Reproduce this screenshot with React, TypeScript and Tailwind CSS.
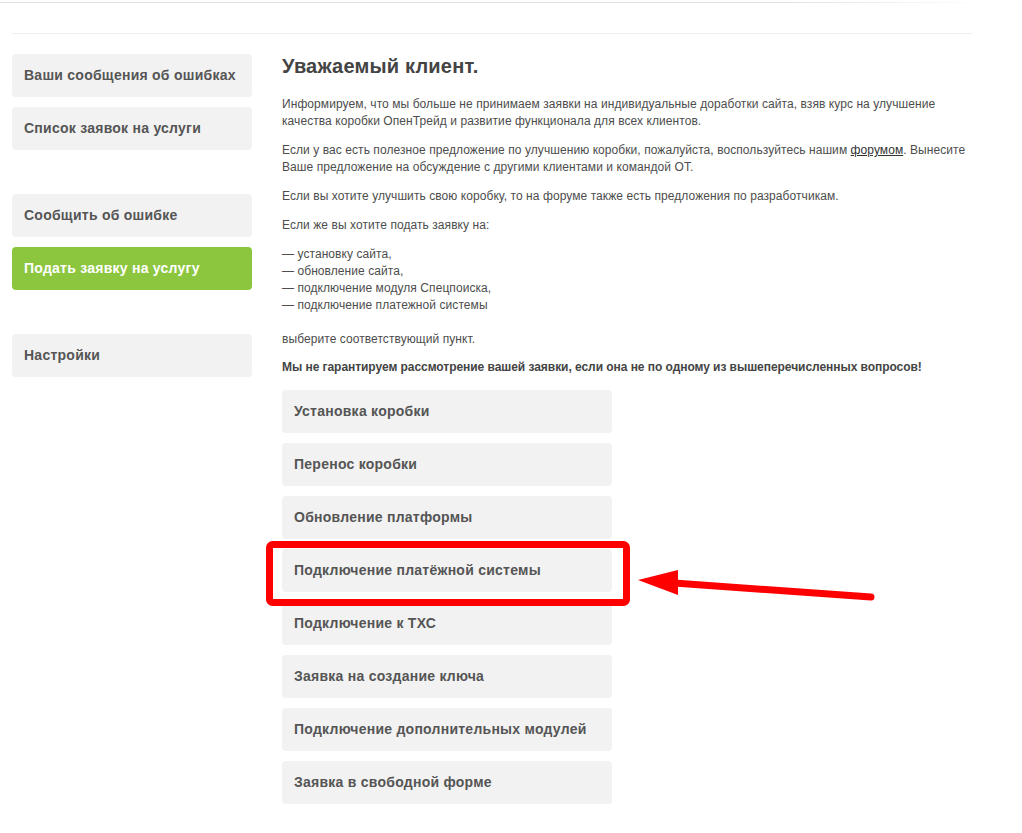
const sideTop = ["Ваши сообщения об ошибках", "Список заявок на услуги"];
const sideMid = [
  { label: "Сообщить об ошибке", active: false },
  { label: "Подать заявку на услугу", active: true },
];

const services = [
  "Установка коробки",
  "Перенос коробки",
  "Обновление платформы",
  "Подключение платёжной системы",
  "Подключение к ТХС",
  "Заявка на создание ключа",
  "Подключение дополнительных модулей",
  "Заявка в свободной форме",
];

function SideItem({ label, active = false }: { label: string; active?: boolean }) {
  return (
    <a
      href="#"
      className={
        active
          ? "flex h-[43px] items-center rounded-[4px] bg-[#8cc63f] pl-[12px] text-[14px] font-bold tracking-[0.25px] text-white"
          : "flex h-[43px] items-center rounded-[4px] bg-[#f2f2f2] pl-[12px] text-[14px] font-bold tracking-[0.25px] text-[#555]"
      }
    >
      {label}
    </a>
  );
}

export default function App() {
  return (
    <div className="relative min-h-[833px] w-[1022px] bg-white font-['Liberation_Sans',Arial,sans-serif] text-[#4a4a4a]">
      {/* top rule */}
      <div className="pt-[2px]">
        <div className="h-[1px] w-[985px] bg-gradient-to-r from-[#e2e2e2] via-[#e2e2e2] via-80% to-transparent"></div>
      </div>

      <div className="ml-[12px] w-[960px]">
        <div className="mt-[30px] h-[1px] bg-[#efefef]"></div>

        <div className="mt-[20px] flex gap-[30px]">
          {/* Sidebar */}
          <div className="flex w-[240px] shrink-0 flex-col">
            <div className="flex flex-col gap-[10px]">
              {sideTop.map((s) => (
                <SideItem key={s} label={s} />
              ))}
            </div>
            <div className="mt-[44px] flex flex-col gap-[10px]">
              {sideMid.map((s) => (
                <SideItem key={s.label} label={s.label} active={s.active} />
              ))}
            </div>
            <div className="mt-[44px]">
              <SideItem label="Настройки" />
            </div>
          </div>

          {/* Main */}
          <div className="w-[690px]">
            <h1 className="text-[20px] leading-[24px] font-bold tracking-[0.2px] text-[#444]">Уважаемый клиент.</h1>
            <div className="mt-[18px] text-[12px] leading-[17px] tracking-[0.07px] text-[#4d4d4d]">
              <p>
                Информируем, что мы больше не принимаем заявки на индивидуальные доработки сайта, взяв курс на улучшение
                качества коробки ОпенТрейд и развитие функционала для всех клиентов.
              </p>
              <p className="mt-[12px]">
                Если у вас есть полезное предложение по улучшению коробки, пожалуйста, воспользуйтесь нашим{" "}
                <a href="#" className="text-[#333] underline">
                  форумом
                </a>
                . Вынесите Ваше предложение на обсуждение с другими клиентами и командой ОТ.
              </p>
              <p className="mt-[12px]">Если вы хотите улучшить свою коробку, то на форуме также есть предложения по разработчикам.</p>
              <p className="mt-[12px]">Если же вы хотите подать заявку на:</p>
              <p className="mt-[12px]">
                — установку сайта,
                <br />— обновление сайта,
                <br />— подключение модуля Спецпоиска,
                <br />— подключение платежной системы
              </p>
              <p className="mt-[17px]">выберите соответствующий пункт.</p>
              <p className="mt-[11px] font-bold tracking-[-0.05px] text-[#444]">
                Мы не гарантируем рассмотрение вашей заявки, если она не по одному из вышеперечисленных вопросов!
              </p>
            </div>

            <div className="mt-[14px] flex w-[330px] flex-col gap-[10px]">
              {services.map((s) => (
                <a
                  key={s}
                  href="#"
                  className="flex h-[43px] items-center rounded-[4px] bg-[#f2f2f2] pl-[12px] text-[14px] font-bold tracking-[0.25px] text-[#555]"
                >
                  {s}
                </a>
              ))}
            </div>
          </div>
        </div>
      </div>

      {/* annotation overlay */}
      <svg className="pointer-events-none absolute left-0 top-0" width="1022" height="833" viewBox="0 0 1022 833">
        <rect x="269.5" y="544.5" width="357" height="58" rx="3" fill="none" stroke="#ff0000" strokeWidth="7" />
        <line x1="674" y1="583" x2="871" y2="597" stroke="#ff0000" strokeWidth="7" strokeLinecap="round" />
        <polygon points="638,580 678,570 678,595" fill="#ff0000" />
      </svg>
    </div>
  );
}
